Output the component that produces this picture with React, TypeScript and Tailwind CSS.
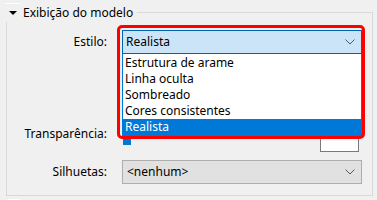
import React from "react";

function Chevron() {
  return (
    <svg width="10" height="6" viewBox="0 0 10 6" className="block">
      <polyline points="0.5,0.5 5,5 9.5,0.5" fill="none" stroke="#5a5a5a" strokeWidth="1" />
    </svg>
  );
}

export default function App() {
  const items = ["Estrutura de arame", "Linha oculta", "Sombreado", "Cores consistentes", "Realista"];
  return (
    <div
      className="relative w-[377px] h-[200px] overflow-hidden bg-[#f0f0f0] text-[12px] text-black pt-[3px]"
      style={{ fontFamily: '"Noto Sans", "Liberation Sans", sans-serif' }}
    >
      <div className="h-px w-[15px] ml-[5px] bg-white" />
      {/* header */}
      <div className="flex h-[18px] items-center pr-[4px]">
        <div className="ml-[9px] w-0 h-0 border-l-[4px] border-r-[4px] border-t-[4px] border-l-transparent border-r-transparent border-t-black" />
        <span className="ml-[6px] leading-[16px] whitespace-nowrap">Exibição do modelo</span>
        <div className="ml-[4px] flex-1 self-end h-[10px] border-t border-r border-[#d9d9d9]" />
      </div>
      {/* body */}
      <div className="ml-[6px] w-[367px] h-[174px] border-l border-r border-b border-[#d9d9d9] flex flex-col">
        {/* Estilo */}
        <div className="mt-[8px] flex h-[24px] items-center">
          <div className="w-[100px] text-right leading-[16px]">Estilo:</div>
          <div className="relative ml-[15px] w-[240px] h-[24px] z-10">
            <div className="h-full flex items-center justify-between border border-[#0063b1] bg-[#cce4f7] pl-[3px] pr-[6px]">
              <span className="leading-[16px]">Realista</span>
              <Chevron />
            </div>
            <div className="absolute left-0 top-full w-full bg-white border-l border-r border-b border-[#0078d7] pt-[1px]">
              {items.map((it, i) => (
                <div
                  key={it}
                  className={
                    i === 4
                      ? "h-[16px] leading-[16px] pl-[2px] bg-[#0078d7] text-white"
                      : "h-[16px] leading-[16px] pl-[2px]"
                  }
                >
                  {it}
                </div>
              ))}
            </div>
          </div>
        </div>
        {/* Transparência */}
        <div className="mt-[72px] flex h-[26px] items-start">
          <div className="w-[100px] text-right leading-[16px]">Transparência:</div>
          <div className="ml-[16px] mt-[-1px] w-[8px] h-[20px] bg-[#0078d7]" />
          <div className="flex-1" />
          <div className="mt-[3px] mr-[13px] w-[39px] h-[23px] border border-[#7a7a7a] bg-white" />
        </div>
        {/* Silhuetas */}
        <div className="mt-[8px] flex h-[24px] items-center">
          <div className="w-[100px] text-right leading-[16px]">Silhuetas:</div>
          <div className="ml-[15px] w-[240px] h-[24px] flex items-center justify-between border border-[#adadad] bg-[#e1e1e1] pl-[4px] pr-[6px]">
            <span className="leading-[16px]">&lt;nenhum&gt;</span>
            <Chevron />
          </div>
        </div>
      </div>
      <div className="mt-[3px] h-px w-[12px] ml-[8px] bg-white" />
      {/* red annotation frame */}
      <div className="pointer-events-none absolute left-[117px] top-[25px] w-[248px] h-[114px] border-[3px] border-[#ff0000] rounded-[5px] z-20" />
    </div>
  );
}
